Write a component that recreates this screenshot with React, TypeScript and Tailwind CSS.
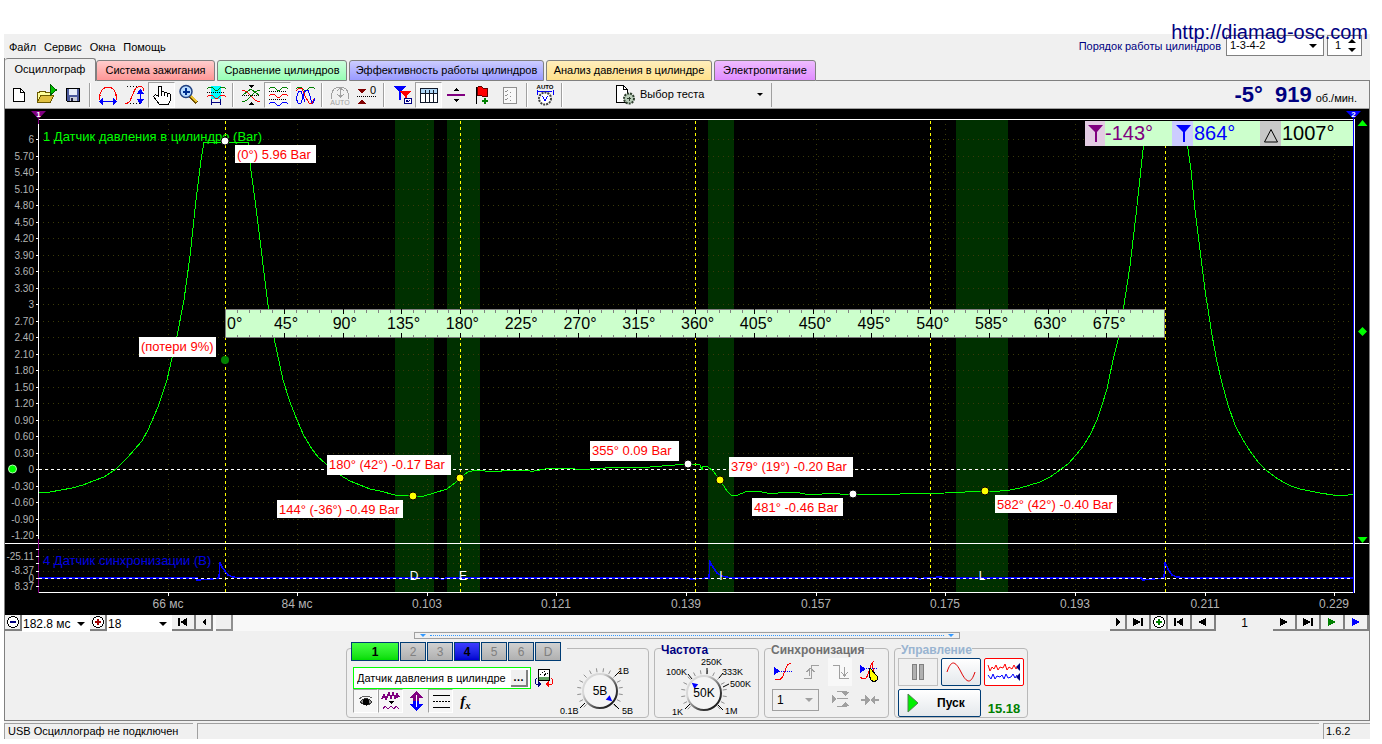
import { useState } from "react";
import type { ReactNode } from "react";

const TABS = [
  { label: "Система зажигания", cls: "w-[119px] from-[#ffcccc] to-[#ff9696]" },
  { label: "Сравнение цилиндров", cls: "w-[130px] from-[#ccffdd] to-[#96ffb4]" },
  { label: "Эффективность работы цилиндров", cls: "w-[195px] from-[#ccccff] to-[#9a9aff]" },
  { label: "Анализ давления в цилиндре", cls: "w-[166px] from-[#ffeebb] to-[#ffe08a]" },
  { label: "Электропитание", cls: "w-[102px] from-[#eebbff] to-[#e08cff]" },
];

const GREEN_TRACE =
  "39,492 50,492 61,490 72,488 83,485 93,481 104,477 116,469 127,458 135,449 142,441 148,430 158,407 167,380 172,358 177,336 184,300 190,256 196,200 201,160 204,142 248,142 250,163 255,200 260,240 268,305 274,338 283,380 290,402 297,420 304,436 312,449 318,457 325,463 333,470 340,475 350,481 360,485 370,489 380,491 395,495 413,496 424,496 434,493 447,489 455,483 460,478 468,472 476,470 485,471 497,472 506,470 515,470 530,471 534,471 545,469 553,468 575,469 590,469 620,467 650,467 662,466 675,465 688,464 700,465 702,470 703,466 708,467 713,471 720,480 727,491 731,495 738,495 745,492 752,491 762,492 772,494 785,492 795,492 805,494 822,494 830,493 840,494 853,494 900,494 945,493 965,492 975,491 985,491 1000,491 1010,490 1020,488 1030,485 1040,482 1050,477 1060,470 1068,464 1076,455 1084,445 1091,433 1097,420 1102,405 1107,389 1113,360 1119,336 1124,305 1130,266 1136,215 1143,150 1144,142";
const GREEN_TRACE_2 =
  "1187,142 1191,170 1195,210 1200,250 1205,290 1212,335 1217,362 1222,383 1228,405 1235,425 1243,440 1250,451 1258,462 1266,470 1275,477 1283,482 1291,486 1300,489 1310,491 1320,493 1333,495 1348,495 1354,494";
const BLUE_TRACE =
  "39,578 197,578 197,580 213,579 219,578 220,562 222,567 225,571 228,575 233,577 242,578 437,578 443,579 446,578 688,578 690,579 709,578 710,562 713,567 717,573 722,576 731,578 916,578 920,579 924,578 940,577 946,578 1141,578 1143,580 1152,579 1164,578 1165,562 1168,569 1172,575 1177,577 1187,578 1354,578";

const PRESSURE_LABELS = [
  "6", "5.70", "5.40", "5.10", "4.80", "4.50", "4.20", "3.90", "3.60", "3.30", "3", "2.70",
  "2.40", "2.10", "1.80", "1.50", "1.20", "0.90", "0.60", "0.30", "0", "-0.30", "-0.60", "-0.90", "-1.20",
];

const TIME_LABELS = [
  { x: 168, t: "66 мс" },
  { x: 297, t: "84 мс" },
  { x: 427, t: "0.103" },
  { x: 556, t: "0.121" },
  { x: 686, t: "0.139" },
  { x: 816, t: "0.157" },
  { x: 945, t: "0.175" },
  { x: 1075, t: "0.193" },
  { x: 1205, t: "0.211" },
  { x: 1334, t: "0.229" },
];

const PHASE_BANDS = [
  { x: 395, w: 39, letter: "D", lx: 414 },
  { x: 447, w: 33, letter: "E", lx: 463 },
  { x: 708, w: 26, letter: "I", lx: 721 },
  { x: 956, w: 52, letter: "L", lx: 982 },
];

const CALLOUTS = [
  { x: 235, y: 145, w: 81, h: 18, t: "(0°) 5.96 Bar" },
  { x: 139, y: 337, w: 77, h: 20, t: "(потери 9%)" },
  { x: 327, y: 455, w: 124, h: 20, t: "180° (42°) -0.17 Bar" },
  { x: 277, y: 500, w: 126, h: 18, t: "144° (-36°) -0.49 Bar" },
  { x: 590, y: 441, w: 89, h: 20, t: "355° 0.09 Bar" },
  { x: 729, y: 457, w: 124, h: 20, t: "379° (19°) -0.20 Bar" },
  { x: 752, y: 498, w: 91, h: 18, t: "481° -0.46 Bar" },
  { x: 995, y: 495, w: 122, h: 18, t: "582° (42°) -0.40 Bar" },
];

const DOTS = [
  { x: 225, y: 141, c: "#ffffff" },
  { x: 413, y: 496, c: "#ffff00" },
  { x: 460, y: 478, c: "#ffff00" },
  { x: 688, y: 464, c: "#ffffff" },
  { x: 720, y: 480, c: "#ffff00" },
  { x: 853, y: 494, c: "#ffffff" },
  { x: 985, y: 491, c: "#ffff00" },
];

function Chart() {
  return (
    <svg viewBox="5 109 1364 506" className="block w-full bg-black font-['Liberation_Sans',sans-serif]">
      {PHASE_BANDS.map((b) => (
        <rect key={b.letter} x={b.x} y={120} width={b.w} height={472} fill="#003000" />
      ))}

      {/* grid */}
      <g shapeRendering="crispEdges" stroke="#3a3a08" strokeDasharray="1 4">
        {PRESSURE_LABELS.map((_, i) => (
          <path key={i} d={`M43 ${Math.round(139 + i * 16.5) + 0.5}H1353`} />
        ))}
        {[549, 556, 563, 571, 586].map((y) => (
          <path key={y} d={`M43 ${y + 0.5}H1353`} />
        ))}
        {TIME_LABELS.map((l) => (
          <path key={l.x} d={`M${l.x + 0.5} 124V592`} />
        ))}
      </g>

      {/* crank angle lines */}
      <g shapeRendering="crispEdges" strokeDasharray="3 3">
        {[225, 460, 695, 930, 1165].map((x) => (
          <path key={x} d={`M${x + 0.5} 121V592`} stroke="#ffff00" />
        ))}
        <path d="M39 469.5H1353" stroke="#fff" />
      </g>

      <g shapeRendering="crispEdges" fill="none">
        <polyline points={BLUE_TRACE} stroke="#0000ff" strokeWidth="1.5" />
        <path d="M39 578.5H1353" stroke="#fff" strokeDasharray="3 3" />
        <polyline points={GREEN_TRACE} stroke="#00ff00" />
        <polyline points={GREEN_TRACE_2} stroke="#00ff00" />
      </g>

      {/* axes */}
      <g shapeRendering="crispEdges" stroke="#fff" fill="none">
        <path d="M38.5 119V593M38 119.5H1355M1354.5 119V593M38 592.5H1355M5 543.5H1369" />
        <path d="M38.5 119V124M38.5 539V593" stroke="#800080" />
        <path d="M1353.5 119V593" stroke="#0000ff" />
        {PRESSURE_LABELS.map((_, i) => (
          <path key={i} d={`M36 ${Math.round(139 + i * 16.5) + 0.5}h3`} />
        ))}
        {[549, 556, 563, 571, 578, 586].map((y) => (
          <path key={y} d={`M36 ${y + 0.5}h3`} />
        ))}
        {TIME_LABELS.map((l) => (
          <path key={l.x} d={`M${l.x + 0.5} 593v3`} />
        ))}
      </g>

      <g fill="#b4b4b4" fontSize="10" textAnchor="end">
        {PRESSURE_LABELS.map((t, i) => (
          <text key={t} x="34" y={Math.round(143 + i * 16.5)}>{t}</text>
        ))}
        <text x="34" y="560">-25.11</text>
        <text x="34" y="574">-8.37</text>
        <text x="34" y="582">0</text>
        <text x="34" y="590">8.37</text>
      </g>
      <g fill="#b4b4b4" fontSize="12" textAnchor="middle">
        {TIME_LABELS.map((l) => (
          <text key={l.x} x={l.x} y="608">{l.t}</text>
        ))}
      </g>
      <g fill="#fff" fontSize="12" textAnchor="middle">
        {PHASE_BANDS.map((b) => (
          <text key={b.letter} x={b.lx} y="580">{b.letter}</text>
        ))}
      </g>
      <text x="43" y="141" fontSize="13" fill="#00ff00">1 Датчик давления в цилиндре (Bar)</text>
      <text x="43" y="565" fontSize="13" fill="#0000e0">4 Датчик синхронизации (В)</text>

      {/* protractor strip */}
      <rect x="225.5" y="309.5" width="939" height="28" fill="#ccffcc" stroke="#808080" />
      <g shapeRendering="crispEdges" stroke="#808080">
        {Array.from({ length: 79 }, (_, i) => {
          const x = Math.round(225 + (i + 1) * 11.75) + 0.5;
          const major = (i + 1) % 5 === 0;
          return <path key={i} stroke={major ? "#000" : "#808080"} d={major ? `M${x} 309v5M${x} 333v5` : `M${x} 309v4M${x} 335v3`} />;
        })}
      </g>
      <g fontSize="16">
        {Array.from({ length: 16 }, (_, i) => (
          <text key={i} x={i === 0 ? 227 : 286 + (i - 1) * 58.8} y="329" textAnchor={i === 0 ? "start" : "middle"}>
            {i * 45}°
          </text>
        ))}
      </g>

      {CALLOUTS.map((c) => (
        <g key={c.t}>
          <rect x={c.x} y={c.y} width={c.w} height={c.h} fill="#fff" />
          <text x={c.x + 2} y={c.y + 14} fontSize="13" fill="#ff0000">{c.t}</text>
        </g>
      ))}
      {DOTS.map((d) => (
        <circle key={d.x} cx={d.x} cy={d.y} r="4" fill={d.c} stroke="#000" />
      ))}
      <circle cx="225" cy="360" r="4" fill="#008000" />
      <circle cx="12.5" cy="469" r="4" fill="#00ff00" stroke="#b0ffb0" />

      {/* cursor markers */}
      <path d="M31 111h15l-7.500 8z" fill="#800080" />
      <path d="M1346 111h15l-7.500 8z" fill="#0000ff" />
      <g fill="#fff" fontSize="8" fontWeight="bold" textAnchor="middle">
        <text x="38.500" y="117">1</text>
        <text x="1353.500" y="117">2</text>
      </g>
      <path d="M1357.500 126h10l-5-6zM1358 331.500l4.500-4.500l4.500 4.500l-4.500 4.500zM1357.500 537h10l-5 6z" fill="#00ff00" />

      {/* cursor readout */}
      <rect x="1085" y="121" width="268" height="25" fill="#ccffcc" />
      <rect x="1085" y="121" width="20" height="25" fill="#e3cce3" />
      <rect x="1172" y="121" width="21" height="25" fill="#ccccff" />
      <rect x="1260" y="121" width="21" height="25" fill="#c8c8c8" />
      <path d="M1088 125h15l-6 7v10h-2v-10z" fill="#800080" />
      <path d="M1176 125h15l-6 7v10h-2v-10z" fill="#0000ff" />
      <path d="M1271 129.500l6.500 12.500h-13z" fill="none" stroke="#000" />
      <g fontSize="20">
        <text x="1105" y="140" fill="#800080">-143°</text>
        <text x="1194" y="140" fill="#0000ff">864°</text>
        <text x="1282" y="140">1007°</text>
      </g>
    </svg>
  );
}

function ToolButton({ label, pressed, children }: { label: string; pressed?: boolean; children: ReactNode }) {
  return (
    <button
      type="button"
      aria-label={label}
      className={`flex h-[26px] w-[27px] items-center justify-center border ${
        pressed ? "border-t-[#a0a0a0] border-l-[#a0a0a0] border-r-white border-b-white bg-[#f8f8f8]" : "border-transparent"
      }`}
    >
      <svg viewBox="0 0 24 24" className="size-6 shrink-0 font-['Liberation_Sans',sans-serif]" fill="none" stroke="#000" shapeRendering="crispEdges">
        {children}
      </svg>
    </button>
  );
}

function Separator() {
  return <div className="mx-[3px] h-[24px] w-[2px] border-l border-[#a0a0a0] bg-white" />;
}

const wave = (y: number) => `M3 ${y + 1}l2-2h3l3 3h3l3-3h3l2 2`;

function Toolbar() {
  return (
    <div className="flex h-[28px] items-center border-b border-[#a0a0a0] bg-[#f0f0f0]">
      <ToolButton label="Новый">
        <path d="M6.500 5.500h7l4 4v9h-11z" fill="#fff" />
        <path d="M13.500 5.500v4h4" />
      </ToolButton>
      <ToolButton label="Открыть">
        <path d="M3.500 19v-10h2l1-1h4l1 1h6v3" fill="#ffff9c" stroke="#6b5a00" />
        <path d="M3.500 19.500l3-7h13l-3 7z" fill="#e0c040" stroke="#6b5a00" />
        <path d="M16.500 2v10l6-5z" fill="#00c000" stroke="#006000" />
      </ToolButton>
      <ToolButton label="Сохранить">
        <path d="M5.500 5.500h13v13h-12l-1-1z" fill="#4c5a9c" />
        <path d="M8 6h8v6h-8z" fill="#e8eef8" stroke="none" />
        <path d="M9 14h7v4h-7z" fill="#c8ccd8" stroke="none" />
        <path d="M10 15h2v3h-2z" fill="#202040" stroke="none" />
      </ToolButton>
      <Separator />
      <ToolButton label="Период">
        <path d="M3.500 17v-4q2-9 8.500-9t8.500 9v4M3 12.500h2M19 12.500h2" stroke="#f00" />
        <path d="M4 18.500h16" stroke="#00f" strokeWidth="1.500" />
        <path d="M3 18.500l4-4v8zM21 18.500l-4-4v8z" fill="#00f" stroke="none" />
      </ToolButton>
      <ToolButton label="Амплитуда">
        <path d="M4 3.500h13M4 20.500h14" strokeDasharray="1 2" />
        <path d="M2 20.500q5 0 6-5l3-7q2-5 6-5q3 0 4 4" stroke="#f00" />
        <path d="M17.500 7v12" stroke="#00f" strokeWidth="1.500" />
        <path d="M17.500 6l-4 5h8zM17.500 21l-4-5h8z" fill="#00f" stroke="none" />
      </ToolButton>
      <ToolButton label="Рука" pressed>
        <path d="M8.500 13v-9q1.500-2 3 0v5q2-1 3 0.500q2-1 3 1q3-0.500 3 2v4l-2 5h-9l-6-8q1-3 5-0.500z" fill="#fff" />
        <path d="M11.500 9v4M14.500 10v3M17.500 11v3" />
      </ToolButton>
      <ToolButton label="Увеличить">
        <path d="M13 13l7 7" stroke="#705000" strokeWidth="4" />
        <path d="M14 13l6 6" stroke="#e8c030" strokeWidth="2" />
        <circle cx="9" cy="8.500" r="6" fill="#b8dcff" stroke="#204080" strokeWidth="1.500" shapeRendering="auto" />
        <path d="M5.500 8.500h7M9 5v7" stroke="#003090" strokeWidth="2" />
      </ToolButton>
      <ToolButton label="Область">
        <path d="M7 3h10v13h-10z" fill="#00ffff" stroke="none" />
        <path d={wave(5)} stroke="#008000" />
        <path d="M3 9.500h18" strokeDasharray="1 1" />
        <path d={wave(13)} stroke="#f00" />
        <path d="M7.500 16v6M16.500 16v6M8 19.500h8" stroke="#000080" />
      </ToolButton>
      <Separator />
      <ToolButton label="Наложение">
        <path d="M3 7q4 0 9 6t9 6" stroke="#f00" />
        <path d="M3 19q4 0 9-6t9-6M4 12l8-6l8 6" stroke="#008000" />
        <path d="M3 12.500h18" strokeDasharray="1 1" />
        <path d="M9 2h6l-3 3zM9 22h6l-3-3z" fill="#000" stroke="none" />
      </ToolButton>
      <ToolButton label="Раздельно" pressed>
        <path d={wave(5)} stroke="#008000" />
        <path d="M3 8.500h18M3 16.500h18" strokeDasharray="1 1" />
        <path d={wave(12)} stroke="#f00" />
        <path d={wave(20)} stroke="#00f" />
      </ToolButton>
      <ToolButton label="Вместе">
        <path d={wave(5)} stroke="#008000" />
        <path d="M3 8l3-3h3l3 8l4 7h3l2-4" stroke="#f00" />
        <path d="M3 15l2 5h3l3-10l2-3h2l2 6l2 7h1l2-5M3 15l3-7h2l4 11" stroke="#00f" />
      </ToolButton>
      <Separator />
      <ToolButton label="Автоуровень">
        <path d="M3.500 16v-4q1-8 8.500-8t8.500 8v4M12.500 5v9M9 8l3.500-3l3.500 3M9 11l3.500 3l3.500-3" stroke="#a0a0a0" />
        <text x="12" y="22" fontSize="7" textAnchor="middle" fill="#a0a0a0" stroke="none">AUTO</text>
      </ToolButton>
      <ToolButton label="Ноль">
        <path d="M3 6h8l-4 5zM3 21h8l-4-5z" fill="#800000" stroke="none" />
        <path d="M2 13.500h20" strokeDasharray="1 1" />
        <text x="15" y="11" fontSize="11" fill="#000" stroke="none">0</text>
      </ToolButton>
      <Separator />
      <ToolButton label="Фильтр">
        <path d="M3 3h13l-5 6v8h-2v-8z" fill="#00f" stroke="none" />
        <path d="M9 8h12l-4 5v6h-2v-6z" fill="#f00" stroke="none" />
        <path d="M14.500 15.500h7v5h-7z" fill="#fff" stroke="#000080" />
        <path d="M16 18.500l1-1l1 1l2-1" stroke="#000080" />
      </ToolButton>
      <ToolButton label="Таблица" pressed>
        <path d="M3.500 5.500h17v14h-17z" fill="#fff" stroke="#101828" />
        <path d="M4 6h16v4h-16z" fill="#b0d8f8" stroke="none" />
        <path d="M4 10.500h16M8.500 7v12M12.500 7v12M16.500 7v12" stroke="#101828" />
      </ToolButton>
      <ToolButton label="Линия">
        <path d="M3 12h18" stroke="#800080" strokeWidth="2" />
        <path d="M9 8h6l-3-3zM9 16h6l-3 3z" fill="#000" stroke="none" />
      </ToolButton>
      <ToolButton label="Метка">
        <path d="M5.500 4v17" strokeWidth="1.500" />
        <path d="M6 5q3-3 6 0h4v8h-5q-3-2-5 0z" fill="#f00" stroke="#600000" />
        <path d="M11 17.500h6M14 14.500v6" stroke="#008000" strokeWidth="2" />
      </ToolButton>
      <ToolButton label="Отчёт">
        <path d="M5.500 4.500h13v16h-13z" fill="#f8f8f8" stroke="#909090" />
        <path d="M7 8l1 1l2-2M7 12l1 1l2-2M7 16l1 1l2-2M12 9h1M12 13h1M12 17h1" stroke="#909090" />
      </ToolButton>
      <Separator />
      <ToolButton label="Авто">
        <text x="12" y="6" fontSize="6" fontWeight="bold" fill="#000" stroke="none" textAnchor="middle">AUTO</text>
        <path d="M5 8.500h14M4 7v5M20 7v5" stroke="#00f" />
        <circle cx="12" cy="15.500" r="6" fill="#fff" stroke="#404040" strokeWidth="2" strokeDasharray="2 1" shapeRendering="auto" />
        <path d="M9.500 13l2.500 5l2.500-5" stroke="#00f" />
      </ToolButton>
      <Separator />

      <button type="button" className="ml-[46px] flex h-[26px] w-[159px] items-center text-[11px]">
        <svg viewBox="0 0 24 24" className="size-6 shrink-0" fill="none" stroke="#000" shapeRendering="crispEdges">
          <path d="M4.500 2.500h7l4 4v13h-11z" fill="#fff" />
          <path d="M11.500 2.500v4h4" />
          <circle cx="17" cy="15.500" r="5" fill="#b8ccb8" stroke="#304030" strokeWidth="2" strokeDasharray="2 1" shapeRendering="auto" />
          <path d="M15 15.500h4M17 13.500v4" stroke="#304030" />
        </svg>
        <span className="flex-1 pl-1 text-left">Выбор теста</span>
        <span className="mr-2 border-x-[3px] border-t-[3px] border-x-transparent border-t-black" />
      </button>
      <div className="h-[24px] w-px bg-[#a0a0a0]" />

      <div className="mr-3 ml-auto flex items-baseline text-[#000080]">
        <b className="text-[22px] leading-6">-5°</b>
        <b className="ml-3 text-[22px] leading-6">919</b>
        <span className="ml-1 text-[11px] text-black">об./мин.</span>
      </div>
    </div>
  );
}

function NavButton({ label, wide, children }: { label: string; wide?: boolean; children: ReactNode }) {
  return (
    <button
      type="button"
      aria-label={label}
      className={`flex h-4 shrink-0 items-center justify-center border-r-2 border-b-2 border-[#808080] bg-[#f0f0f0] ${wide ? "w-6" : "w-[17px]"}`}
    >
      <svg viewBox="0 0 14 14" className="size-[14px] shrink-0" fill="#000" shapeRendering="crispEdges">
        {children}
      </svg>
    </button>
  );
}

function FlatSelect({ label, value, cls }: { label: string; value: string; cls: string }) {
  return (
    <div className={`relative shrink-0 ${cls}`}>
      <select aria-label={label} defaultValue={value} className="size-full appearance-none bg-transparent pl-1 outline-none">
        <option>{value}</option>
      </select>
      <span className="pointer-events-none absolute top-1/2 right-[5px] -mt-[2px] border-x-4 border-t-4 border-x-transparent border-t-current" />
    </div>
  );
}

function ZoomGlyph({ color, plus }: { color: string; plus?: boolean }) {
  return (
    <>
      <circle cx="7" cy="7" r="5.500" fill="#fff" stroke="#000" />
      <path d={plus ? "M4 7h6M7 4v6" : "M4 7h6"} stroke={color} strokeWidth="2" />
    </>
  );
}

function ScrollRow() {
  return (
    <div className="flex h-[17px] text-[12px] leading-4">
      <NavButton label="Уменьшить"><ZoomGlyph color="#000080" /></NavButton>
      <FlatSelect label="Развёртка" value="182.8 мс" cls="w-[68px] bg-white -indent-[3px]" />
      <NavButton label="Увеличить"><ZoomGlyph color="#a00000" plus /></NavButton>
      <FlatSelect label="Масштаб" value="18" cls="w-[65px] bg-white -indent-[3px]" />
      <NavButton label="В начало" wide><path d="M2 3h2v8h-2zM11 3v8l-7-4z" /></NavButton>
      <NavButton label="Назад"><path d="M9 3v8l-4-4z" /></NavButton>
      <div className="flex h-4 flex-1 bg-[#f8f8f8] pl-[3px]">
        <div className="h-4 w-[17px] border-r-2 border-b-2 border-[#909090] bg-[#f0f0f0]" />
      </div>
      <NavButton label="Вперёд"><path d="M5 3v8l4-4z" /></NavButton>
      <NavButton label="В конец" wide><path d="M10 3h2v8h-2zM2 3v8l8-4z" /></NavButton>
      <NavButton label="Добавить"><ZoomGlyph color="#008000" plus /></NavButton>
      <NavButton label="Первый кадр" wide><path d="M2 3h2v8h-2zM11 3v8l-7-4z" /></NavButton>
      <NavButton label="Предыдущий кадр" wide><path d="M10 3v8l-8-4z" /></NavButton>
      <span className="w-[57px] text-center">1</span>
      <NavButton label="Следующий кадр" wide><path d="M3 3v8l8-4z" /></NavButton>
      <NavButton label="Последний кадр" wide><path d="M10 3h2v8h-2zM2 3v8l8-4z" /></NavButton>
      <NavButton label="Воспроизвести" wide><path d="M3 3v8l8-4z" fill="#008000" /></NavButton>
      <NavButton label="Далее" wide><path d="M3 3v8l8-4z" fill="#00f" /></NavButton>
    </div>
  );
}

function Group({ title, titleCls, cls, children }: { title: string; titleCls: string; cls: string; children: ReactNode }) {
  return (
    <fieldset className={`h-[77px] rounded border border-[#b8b8b8] ${cls}`}>
      <legend className={`ml-[6px] h-[14px] text-[12px] leading-[18px] font-bold ${titleCls}`}>{title}</legend>
      {children}
    </fieldset>
  );
}

// tick marks run around the dial, the lower quarter stays empty
function Dial({ cx, cy, value, tip }: { cx: number; cy: number; value: string; tip: number }) {
  const ticks = Array.from({ length: 16 }, (_, i) => -225 + i * 18);
  return (
    <>
      {ticks.map((a) => {
        const r = (a * Math.PI) / 180;
        return (
          <path
            key={a}
            stroke="#909090"
            d={`M${cx + Math.cos(r) * 19} ${cy + Math.sin(r) * 19}L${cx + Math.cos(r) * 23} ${cy + Math.sin(r) * 23}`}
          />
        );
      })}
      <circle cx={cx} cy={cy} r="17" fill="#f4f4f4" stroke="url(#rim)" strokeWidth="2" />
      <path d="M10 -3l6 3l-6 3z" fill="#00f" transform={`translate(${cx} ${cy}) rotate(${tip})`} />
      <text x={cx} y={cy + 4} fontSize="12" textAnchor="middle">{value}</text>
    </>
  );
}

function SmallToggle({ label, pressed, children }: { label: string; pressed?: boolean; children: ReactNode }) {
  return (
    <button
      type="button"
      aria-label={label}
      className={`flex h-6 w-[25px] items-center justify-center border ${
        pressed ? "border-t-[#a0a0a0] border-l-[#a0a0a0] border-r-white border-b-white bg-[#f6f6f6]" : "border-transparent"
      }`}
    >
      <svg viewBox="0 0 22 22" className="size-[22px] shrink-0" fill="none" stroke="#000" shapeRendering="crispEdges">
        {children}
      </svg>
    </button>
  );
}

function ChannelPanel() {
  const [name, setName] = useState("Датчик давления в цилиндре");
  return (
    <fieldset className="h-[77px] w-[303px] rounded border border-[#b8b8b8]">
      <legend className="ml-1 h-[14px] bg-[#f0f0f0] pr-[6px]">
        <div className="flex gap-px pt-px text-[12px] font-bold">
          <button type="button" className="h-[19px] w-12 border border-[#003c74] bg-linear-to-b from-[#40ff40] to-[#00dc00]">1</button>
          {["2", "3", "4", "5", "6", "D"].map((ch) => (
            <button
              key={ch}
              type="button"
              className={`h-[19px] w-[26px] border border-[#003c74] bg-linear-to-b ${
                ch === "4" ? "from-[#3c3cff] to-[#0000d0]" : "from-[#d0d0d0] to-[#b0b0b0] font-normal text-[#808080]"
              }`}
            >
              {ch}
            </button>
          ))}
        </div>
      </legend>
      <div className="flex">
        <div className="pt-3 pl-[6px]">
          <div className="flex items-center">
            <div className="flex h-[22px] w-[178px] items-center border border-[#00ff00] bg-white pr-px">
              <input
                aria-label="Название канала"
                value={name}
                onChange={(e) => setName(e.target.value)}
                className="w-[157px] min-w-0 pl-[3px] text-[11px] outline-none"
              />
              <button type="button" className="h-[17px] w-[17px] shrink-0 border-r-2 border-b-2 border-[#808080] bg-[#f0f0f0] text-[11px] leading-[10px] font-bold">…</button>
            </div>
            <svg viewBox="0 0 22 22" className="ml-[2px] size-[22px]" fill="none" stroke="#000" shapeRendering="crispEdges">
              <path d="M5.500 2.500h11v11h-11z" fill="#fff" />
              <path d="M6 10h10v3h-10z" fill="#60a060" stroke="none" />
              <path d="M7.500 7v1M9.500 5v1M11.500 4v1M14.500 6v1M11 9l2-3" />
              <path d="M4 11q-3 3-1 6h4" stroke="#000080" />
              <path d="M18 11q3 3 1 6h-4" stroke="#f00" />
              <path d="M5 14l4 3l-4 3z" fill="#000080" stroke="none" />
              <path d="M16 14l-4 3l4 3z" fill="#f00" stroke="none" />
            </svg>
          </div>
          <div className="flex">
            <SmallToggle label="Видимость" pressed>
              <path d="M5 12q6-7 12 0q-5 6-12 0z" fill="#909090" stroke="#303030" />
              <path d="M4 9q6-5 13-1" stroke="#606060" />
              <circle cx="11" cy="12" r="2.500" fill="#000" />
            </SmallToggle>
            <SmallToggle label="Сглаживание" pressed>
              <path d="M2 9l2-4l2 4l3-6l2 5l2-5l2 5l2-4l2 3M17 3v5" stroke="#800080" strokeWidth="1.500" />
              <path d="M8 11h6l-3 3z" fill="#000" stroke="none" />
              <path d="M3 19l2-3l3 3l3-3l3 3l2-3l3 3" stroke="#800080" />
            </SmallToggle>
            <SmallToggle label="Инверсия">
              <path d="M11 1l7 7h-4v3h-6v-3h-4z" fill="#800080" stroke="none" />
              <path d="M11 21l7-7h-4v-3h-6v3h-4z" fill="#00f" stroke="none" />
              <path d="M11 5v12" stroke="#fff" />
            </SmallToggle>
            <SmallToggle label="Линии" pressed>
              <path d="M3 5.500h17M3 17.500h17" />
              <path d="M3 11.500h17" strokeDasharray="2 1" />
            </SmallToggle>
            <button type="button" aria-label="Функция" className="h-6 w-[25px] font-['Liberation_Serif',serif] text-[15px] leading-4 font-bold italic">
              f<sub className="text-[11px]">x</sub>
            </button>
          </div>
        </div>
        <svg viewBox="0 0 92 62" className="h-[62px] w-[92px] font-['Liberation_Sans',sans-serif]">
          <Dial cx={45} cy={36} value="5В" tip={40} />
          <path d="M60 21l5-5M30 48l-5 5M59 49l5 5" stroke="#000" />
          <g fontSize="9">
            <text x="63" y="19">1В</text>
            <text x="5" y="59">0.1В</text>
            <text x="67" y="59">5В</text>
          </g>
        </svg>
      </div>
    </fieldset>
  );
}

function ControlPanels() {
  return (
    <div className="flex justify-center gap-[5px] pt-[2px] pb-[2px]">
      <ChannelPanel />

      <Group title="Частота" titleCls="text-[#000080]" cls="w-[105px]">
        <svg viewBox="0 0 103 62" className="h-[62px] w-[103px] font-['Liberation_Sans',sans-serif]">
          <Dial cx={49} cy={38} value="50K" tip={220} />
          <path d="M52 19v-6M64 23l4-5M68 32l6-3M37 24l-4-5M35 49l-5 5M63 50l5 5" stroke="#000" />
          <g fontSize="9">
            <text x="46" y="10">250K</text>
            <text x="11" y="20">100K</text>
            <text x="67" y="20">333K</text>
            <text x="75" y="32">500K</text>
            <text x="17" y="60">1K</text>
            <text x="70" y="59">1М</text>
          </g>
        </svg>
      </Group>

      <Group title="Синхронизация" titleCls="text-[#707070]" cls="w-[125px]">
        <div className="grid grid-cols-[27px_29px_30px_26px] gap-y-[3px] pt-[3px] pl-[7px]">
          {/* row of trigger edge modes */}
          <svg viewBox="0 0 24 24" className="h-7 w-6" fill="none" shapeRendering="crispEdges">
            <path d="M3 19q5 3 8-3l3-8q1-4 5-5" stroke="#f00" />
            <path d="M3 11.500h17" stroke="#00f" strokeDasharray="1 1" />
            <path d="M2 7l6 4l-6 4z" fill="#00f" />
          </svg>
          <svg viewBox="0 0 24 24" className="h-7 w-6" fill="none" stroke="#a0a0a0" shapeRendering="crispEdges">
            <path d="M5 18.500h7v-13h8M11.500 8l-4 4M11.500 8l4 4M10.500 8v8" />
          </svg>
          <svg viewBox="0 0 24 24" className="h-7 w-6 bg-[#f8f8f8]" fill="none" stroke="#a0a0a0" shapeRendering="crispEdges">
            <path d="M5 5.500h6v13h10M16.500 7v8M13 12l3.500 4l3.500-4" />
          </svg>
          <svg viewBox="0 0 24 24" className="h-7 w-6" fill="none" shapeRendering="crispEdges">
            <path d="M2 17q6 5 8-3l3-9l3-4M14 4l4 16" stroke="#f00" />
            <path d="M2 8.500h18" stroke="#00f" strokeDasharray="1 1" />
            <path d="M2 5l6 4l-6 4z" fill="#00f" />
            <path d="M12 8l7 8v4l-3 2l-3-2l-2-5z" fill="#ff0" stroke="#000" />
          </svg>
          <FlatSelect label="Канал синхронизации" value="1" cls="col-span-2 h-[22px] w-[47px] border border-[#a0a0a0] text-[12px] [&>span]:text-[#a0a0a0]" />
          <svg viewBox="0 0 24 22" className="h-[22px] w-6" fill="#a0a0a0" stroke="#a0a0a0" shapeRendering="crispEdges">
            <path d="M4 6v8l5-4zM14 3h7l-3.500 4zM14 17h7l-3.500-4z" stroke="none" />
            <path d="M9 2.500h10M9 17.500h10M9 9.500h11" />
          </svg>
          <svg viewBox="0 0 24 22" className="h-[22px] w-6" fill="#a0a0a0" shapeRendering="crispEdges">
            <path d="M3 10h4v-4l5 5l-5 5v-4h-4zM21 10h-4v-4l-5 5l5 5v-4h4z" />
          </svg>
        </div>
      </Group>

      <Group title="Управление" titleCls="text-[#99b4d1]" cls="w-[134px]">
        <div className="grid grid-cols-[40px_40px_40px] gap-[3px] px-[3px] pt-[3px]">
          <button type="button" aria-label="Пауза" className="flex h-7 items-center justify-center gap-[2px] border border-[#c0c0c0]">
            <span className="h-4 w-[5px] border border-[#808080] bg-[#b0b0b0]" />
            <span className="h-4 w-[5px] border border-[#808080] bg-[#b0b0b0]" />
          </button>
          <button type="button" aria-label="Синус" className="flex h-7 items-center justify-center rounded-xs border border-[#003c74] bg-linear-to-b from-white to-[#e4e8ec]">
            <svg viewBox="0 0 30 20" className="h-5 w-[30px]" fill="none" stroke="#e00000">
              <path d="M1 10C5-2 9-2 15 10S25 22 29 10" />
            </svg>
          </button>
          <button type="button" aria-label="Поток" className="flex h-7 items-center justify-center rounded-xs border border-[#ff0000] bg-white">
            <svg viewBox="0 0 34 22" className="h-[22px] w-[34px]" fill="none">
              <path d="M1 4l2 6l2-4l2 2l2-4l2 5l2-3l3 1l2-4l2 6l2-3l3 2l2-4l2 4l2-3" stroke="#f00" />
              <path d="M1 14l3 4l2-5l2 5l2-3l3 1l2-2l2 4l2-5l2 4l3-1l2-3l2 4l2-3" stroke="#00f" />
              <path d="M33 2v8l-4-4zM33 12v8l-4-4z" fill="#000080" />
            </svg>
          </button>
          <button type="button" className="col-span-2 flex h-7 items-center rounded-xs border border-[#003c74] bg-linear-to-b from-white to-[#e4e8ec] pl-2 text-[12px] font-bold">
            <svg viewBox="0 0 12 20" className="h-5 w-3"><path d="M1 1v18l10-9z" fill="#00f000" stroke="#508050" /></svg>
            <span className="ml-[18px]">Пуск</span>
          </button>
          <span className="self-end text-center text-[13px] leading-4 font-bold text-[#008000]">15.18</span>
        </div>
      </Group>
    </div>
  );
}

export default function App() {
  const [order, setOrder] = useState("1-3-4-2");
  return (
    <div className="bg-white pt-[34px] pr-3 pb-1 pl-1 font-['Liberation_Sans',sans-serif] text-[11px] text-black">
      <svg className="absolute size-0">
        <defs>
          <linearGradient id="rim" x1="0" y1="0" x2="1" y2="1">
            <stop offset="0.300" stopColor="#d8d8d8" />
            <stop offset="0.700" stopColor="#404040" />
            <stop offset="1" stopColor="#000" />
          </linearGradient>
        </defs>
      </svg>

      <div className="relative bg-[#f0f0f0]">
        <a href="http://diamag-osc.com" className="absolute -top-[14px] right-[2px] z-10 text-[20px] leading-6 text-[#000080]">
          http://diamag-osc.com
        </a>

        <header className="flex h-6 justify-between">
          <nav className="flex items-center gap-2 pt-[2px] pl-[5px]">
            {["Файл", "Сервис", "Окна", "Помощь"].map((m) => (
              <button key={m} type="button">{m}</button>
            ))}
          </nav>
          <div className="flex items-start gap-[3px] pr-2">
            <label htmlFor="order" className="pt-1 pr-[2px] text-[#000080]">Порядок работы цилиндров</label>
            <div className="relative mt-px h-[21px] w-[98px] border border-[#808080] bg-white">
              <select id="order" value={order} onChange={(e) => setOrder(e.target.value)} className="size-full appearance-none pl-[3px] outline-none">
                <option>1-3-4-2</option>
                <option>1-2-4-3</option>
              </select>
              <span className="pointer-events-none absolute top-2 right-[6px] border-x-4 border-t-4 border-x-transparent border-t-black" />
            </div>
            <div className="mt-px flex h-[21px] w-[35px] items-center border border-[#808080] bg-white">
              <input aria-label="Номер цилиндра" defaultValue="1" className="w-5 text-center outline-none" />
              <div className="flex flex-col gap-[5px]">
                <button type="button" aria-label="Больше" className="border-x-4 border-b-4 border-x-transparent border-b-black" />
                <button type="button" aria-label="Меньше" className="border-x-4 border-t-4 border-x-transparent border-t-black" />
              </div>
            </div>
          </div>
        </header>

        <div className="border-l border-[#808080]">
          <div className="flex h-[23px] items-end gap-[2px]">
            <button type="button" className="-mr-[2px] h-[23px] w-[91px] rounded-t-[3px] border-t border-r border-[#808080] pb-px">Осциллограф</button>
            {TABS.map((t) => (
              <button key={t.label} type="button" className={`h-[21px] rounded-t-[3px] border border-[#808080] bg-linear-to-b ${t.cls}`}>
                {t.label}
              </button>
            ))}
            <div className="-ml-[2px] flex-1 border-b border-[#808080]" />
          </div>

          <div className="border-r border-b border-[#808080]">
            <Toolbar />
            <Chart />
            <ScrollRow />
            <div className="flex justify-center">
              <div className="flex h-[7px] w-[546px] items-center gap-1 border border-[#a0a0a0] px-[5px]">
                <span className="border-x-[3px] border-t-[3px] border-x-transparent border-t-[#3399ff]" />
                <span className="flex-1 border-t border-dotted border-[#3399ff]" />
                <span className="border-x-[3px] border-t-[3px] border-x-transparent border-t-[#3399ff]" />
              </div>
            </div>
            <ControlPanels />
          </div>
        </div>

        <footer className="mt-[2px] flex h-4 gap-1 leading-[15px]">
          <div className="w-[189px] border-t border-l border-[#a0a0a0] pl-[3px]">USB Осциллограф не подключен</div>
          <div className="flex-1 border-t border-l border-[#a0a0a0]" />
          <div className="w-[47px] border-t border-l border-[#a0a0a0] pl-[2px]">1.6.2</div>
        </footer>
      </div>
    </div>
  );
}
